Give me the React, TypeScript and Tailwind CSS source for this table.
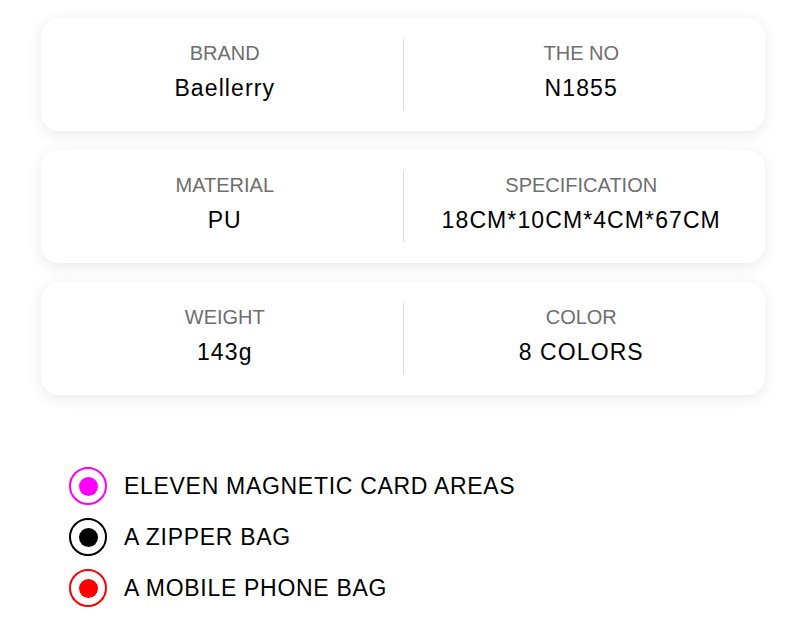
const specs = [
  [
    { label: 'BRAND', value: 'Baellerry' },
    { label: 'THE NO', value: 'N1855' },
  ],
  [
    { label: 'MATERIAL', value: 'PU' },
    { label: 'SPECIFICATION', value: '18CM*10CM*4CM*67CM' },
  ],
  [
    { label: 'WEIGHT', value: '143g' },
    { label: 'COLOR', value: '8 COLORS' },
  ],
];

const features = [
  { text: 'ELEVEN MAGNETIC CARD AREAS', ring: 'border-[#ff00ff]', dot: 'bg-[#ff00ff]' },
  { text: 'A ZIPPER BAG', ring: 'border-black', dot: 'bg-black' },
  { text: 'A MOBILE PHONE BAG', ring: 'border-[#ff0000]', dot: 'bg-[#ff0000]' },
];

export default function App() {
  return (
    <div className="w-[800px] h-[640px] bg-white font-['Liberation_Sans',Arial,sans-serif] pt-[18px]">
      <div className="flex flex-col gap-[19px] ml-[41px] w-[724px]">
        {specs.map((row, i) => (
          <div
            key={i}
            className="h-[113px] bg-white rounded-[18px] shadow-[0_3px_16px_rgba(0,0,0,0.09)] flex items-center"
          >
            <Cell {...row[0]} className="pl-[6px]" />
            <div className="w-px h-[71px] bg-[#dcdcdc]" />
            <Cell {...row[1]} className="pr-[6px]" />
          </div>
        ))}
      </div>

      <div className="mt-[72px] ml-[69px] flex flex-col gap-[13px]">
        {features.map((f) => (
          <div key={f.text} className="flex items-center h-[38px]">
            <div className={`w-[38px] h-[38px] rounded-full border-2 ${f.ring} flex items-center justify-center`}>
              <div className={`w-[19px] h-[19px] rounded-full ${f.dot}`} />
            </div>
            <span className="ml-[17px] text-[23px] text-black tracking-[0.7px]">{f.text}</span>
          </div>
        ))}
      </div>
    </div>
  );
}

function Cell({ label, value, className }: { label: string; value: string; className: string }) {
  return (
    <div className={`flex-1 self-stretch flex flex-col items-center pt-[25px] ${className}`}>
      <span className="text-[20px] leading-[20px] text-[#6e6e6e]">{label}</span>
      <span className="mt-[14px] text-[23px] leading-[23px] text-black tracking-[1.1px]">{value}</span>
    </div>
  );
}
